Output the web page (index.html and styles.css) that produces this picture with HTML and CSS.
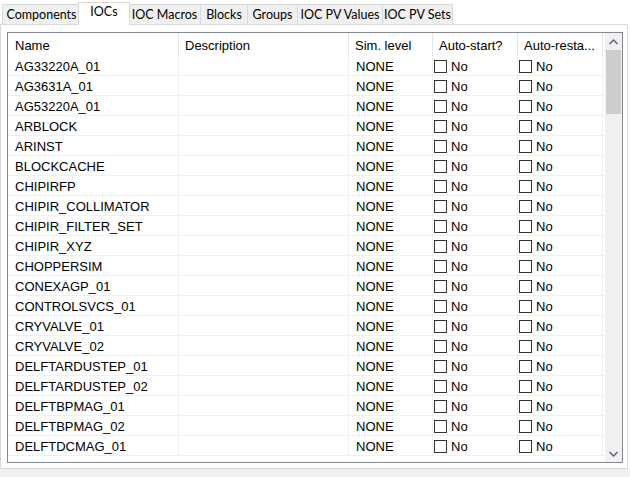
FILE: index.html
```html
<!DOCTYPE html>
<html>
<head>
<meta charset="utf-8">
<link rel="stylesheet" href="styles.css">
</head>
<body>
<div class="window">
  <div class="tabs">
    <div class="tab w-comp">Components</div>
    <div class="tab tab-active w-iocs">IOCs</div>
    <div class="tab w-macros">IOC Macros</div>
    <div class="tab w-blocks">Blocks</div>
    <div class="tab w-groups">Groups</div>
    <div class="tab w-pvvals">IOC PV Values</div>
    <div class="tab tab-last w-pvsets">IOC PV Sets</div>
  </div>
  <div class="panel">
    <div class="table">
      <div class="body">
        <div class="row head">
          <div class="cell">Name</div>
          <div class="cell">Description</div>
          <div class="cell">Sim. level</div>
          <div class="cell">Auto-start?</div>
          <div class="cell">Auto-resta...</div>
        </div>
        <div id="rows"></div>
      </div>
      <div class="scrollbar">
        <div class="sb-btn"><svg width="9" height="6" viewBox="0 0 9 6"><path d="M0.5 5 L4.5 1 L8.5 5" fill="none" stroke="#606060" stroke-width="1.4"/></svg></div>
        <div class="sb-track"><div class="sb-thumb"></div></div>
        <div class="sb-btn"><svg width="9" height="6" viewBox="0 0 9 6"><path d="M0.5 1 L4.5 5 L8.5 1" fill="none" stroke="#606060" stroke-width="1.4"/></svg></div>
      </div>
    </div>
  </div>
  <div class="footer"></div>
</div>
<script src="app.js"></script>
</body>
</html>
```
FILE: app.js
```js
const names = ["AG33220A_01","AG3631A_01","AG53220A_01","ARBLOCK","ARINST","BLOCKCACHE","CHIPIRFP","CHIPIR_COLLIMATOR","CHIPIR_FILTER_SET","CHIPIR_XYZ","CHOPPERSIM","CONEXAGP_01","CONTROLSVCS_01","CRYVALVE_01","CRYVALVE_02","DELFTARDUSTEP_01","DELFTARDUSTEP_02","DELFTBPMAG_01","DELFTBPMAG_02","DELFTDCMAG_01"];
const host = document.getElementById("rows");
const chk = '<span class="check"><span class="box"></span>No</span>';
host.innerHTML = names.map(n =>
  '<div class="row"><div class="cell">' + n + '</div><div class="cell"></div><div class="cell">NONE</div><div class="cell cb">' + chk + '</div><div class="cell cb">' + chk + '</div></div>'
).join("");
```
FILE: styles.css
```css
* { box-sizing: border-box; }
html, body { margin: 0; padding: 0; }
body {
  background: #ffffff;
  font-family: "Liberation Sans", Arial, sans-serif;
  font-size: 13px;
  color: #000;
}
.window {
  width: 630px;
  height: 477px;
  display: flex;
  flex-direction: column;
  overflow: hidden;
}
.tabs {
  height: 24px;
  display: flex;
  align-items: flex-end;
  padding-left: 2px;
  font-family: Lato, "Noto Sans", sans-serif;
  font-size: 12.5px;
}
.tab {
  height: 20px;
  line-height: 19px;
  background: #f0f0f0;
  border-top: 1px solid #d9d9d9;
  border-left: 1px solid #d9d9d9;
  text-align: center;
  white-space: nowrap;
}
.tab-last { border-right: 1px solid #d9d9d9; }
.tab-active {
  height: 23px;
  margin: 0 -2px -1px -2px;
  background: #ffffff;
  border-right: 1px solid #d9d9d9;
  line-height: 18px;
  z-index: 1;
  position: relative;
}
.w-comp { width: 78px; }
.w-iocs { width: 52px; }
.w-macros { width: 72px; }
.w-blocks { width: 47px; }
.w-groups { width: 50px; }
.w-pvvals { width: 85px; }
.w-pvsets { width: 71px; }
.panel {
  width: 628px;
  height: 445px;
  background: #ffffff;
  border: 1px solid #d9d9d9;
  padding: 7px 4px 4px 6px;
}
.table {
  height: 431px;
  border: 1px solid #828790;
  display: flex;
}
.body {
  flex: 1;
  overflow: hidden;
}
.row {
  display: grid;
  grid-template-columns: 171px 170px 84px 85px 85px;
  height: 20px;
  border-bottom: 1px solid #f0f0f0;
}
.row.head {
  height: 23px;
  border-bottom: none;
}
.cell {
  border-right: 1px solid #f0f0f0;
  padding-left: 7px;
  padding-top: 1px;
  line-height: 19px;
  white-space: nowrap;
  overflow: hidden;
}
.head .cell {
  border-right: 1px solid #e5e5e5;
  line-height: 23px;
  padding-top: 1px;
  padding-left: 6px;
}
.head .cell:first-child { padding-left: 7px; }
.cell.cb { padding-left: 1px; padding-top: 0; }
.check {
  display: inline-flex;
  align-items: center;
  gap: 4px;
  height: 20px;
  line-height: 19px;
}
.check .box { margin-top: 1px; }
.box {
  width: 13px;
  height: 13px;
  border: 1px solid #333333;
  background: #fff;
}
.scrollbar {
  width: 17px;
  background: #f0f0f0;
  display: flex;
  flex-direction: column;
}
.sb-btn {
  height: 17px;
  display: flex;
  align-items: center;
  justify-content: center;
}
.sb-track {
  flex: 1;
  padding: 0 1px;
}
.sb-thumb {
  height: 64px;
  background: #cdcdcd;
}
.footer {
  flex: 1;
  background: #f0f0f0;
}
```
